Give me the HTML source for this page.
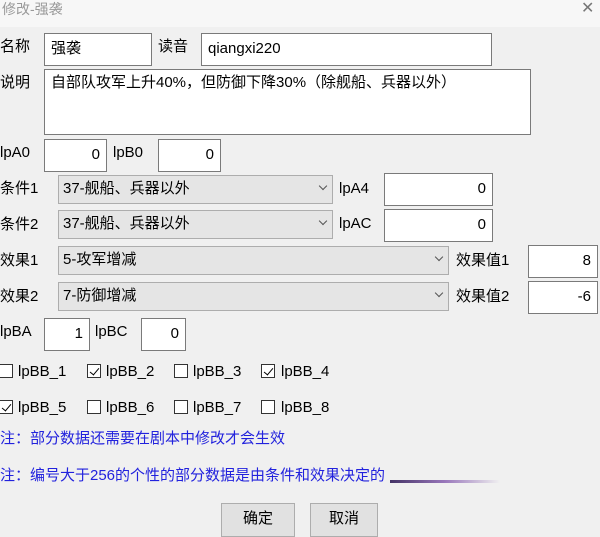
<!DOCTYPE html>
<html><head><meta charset="utf-8"><style>
*{box-sizing:border-box;margin:0;padding:0}
body{width:600px;height:531px;overflow:hidden;background:#f0f0f0;position:relative;font-family:"Liberation Sans","Noto Sans CJK SC",sans-serif;font-size:15px;color:#000}
.t{position:absolute;white-space:nowrap;line-height:18px}
.i{position:absolute;background:#fff;border:1px solid #7a7a7a;line-height:18px;padding:0 6px;white-space:nowrap}
.r{text-align:right;padding-top:6px}
.s{position:absolute;background:#e5e5e5;border:1px solid #adadad;padding:4px 4px 0;line-height:18px;white-space:nowrap}
.s:after{content:"";position:absolute;right:6px;top:7px;width:5px;height:5px;border-right:1px solid #555;border-bottom:1px solid #555;transform:rotate(45deg)}
.c{position:absolute;width:14px;height:14px;border:1px solid #333;background:#fff}
.c.k:after{content:"";position:absolute;left:4px;top:1px;width:4px;height:8px;border-right:1px solid #000;border-bottom:1px solid #000;transform:rotate(40deg)}
.b{position:absolute;background:#e1e1e1;border:1px solid #adadad;text-align:center;line-height:30px}
.n{color:#2222dd;font-size:15px}
</style></head><body>
<div style="position:absolute;left:0;top:0;width:600px;height:27px;background:#f7f7f7"></div>
<div class="t" style="left:2px;top:0;color:#999;font-size:14px">修改-强袭</div>
<div class="t" style="left:581px;top:0;color:#777;font-size:16px">✕</div>

<div class="t" style="left:0;top:38px">名称</div>
<div class="i" style="left:44px;top:33px;width:108px;height:33px;padding-top:6px">强袭</div>
<div class="t" style="left:158px;top:38px">读音</div>
<div class="i" style="left:201px;top:33px;width:291px;height:33px;padding-top:6px">qiangxi220</div>

<div class="t" style="left:0;top:74px">说明</div>
<div class="i" style="left:44px;top:69px;width:487px;height:66px;padding-top:4px">自部队攻军上升40%，但防御下降30%（除舰船、兵器以外）</div>

<div class="t" style="left:0;top:144px">lpA0</div>
<div class="i r" style="left:44px;top:139px;width:63px;height:33px">0</div>
<div class="t" style="left:113px;top:144px">lpB0</div>
<div class="i r" style="left:158px;top:139px;width:63px;height:33px">0</div>

<div class="t" style="left:0;top:180px">条件1</div>
<div class="s" style="left:58px;top:175px;width:275px;height:29px">37-舰船、兵器以外</div>
<div class="t" style="left:339px;top:180px">lpA4</div>
<div class="i r" style="left:384px;top:173px;width:109px;height:33px">0</div>

<div class="t" style="left:0;top:216px">条件2</div>
<div class="s" style="left:58px;top:210px;width:275px;height:29px">37-舰船、兵器以外</div>
<div class="t" style="left:339px;top:215px">lpAC</div>
<div class="i r" style="left:384px;top:209px;width:109px;height:33px">0</div>

<div class="t" style="left:0;top:252px">效果1</div>
<div class="s" style="left:58px;top:246px;width:391px;height:29px">5-攻军增减</div>
<div class="t" style="left:456px;top:252px">效果值1</div>
<div class="i r" style="left:528px;top:245px;width:70px;height:33px">8</div>

<div class="t" style="left:0;top:288px">效果2</div>
<div class="s" style="left:58px;top:282px;width:391px;height:29px">7-防御增减</div>
<div class="t" style="left:456px;top:288px">效果值2</div>
<div class="i r" style="left:528px;top:281px;width:70px;height:33px">-6</div>

<div class="t" style="left:0;top:323px">lpBA</div>
<div class="i r" style="left:44px;top:318px;width:46px;height:33px">1</div>
<div class="t" style="left:95px;top:323px">lpBC</div>
<div class="i r" style="left:141px;top:318px;width:45px;height:33px">0</div>

<div class="c" style="left:-1px;top:364px"></div><div class="t" style="left:18px;top:363px">lpBB_1</div>
<div class="c k" style="left:87px;top:364px"></div><div class="t" style="left:106px;top:363px">lpBB_2</div>
<div class="c" style="left:174px;top:364px"></div><div class="t" style="left:193px;top:363px">lpBB_3</div>
<div class="c k" style="left:261px;top:364px"></div><div class="t" style="left:281px;top:363px">lpBB_4</div>

<div class="c k" style="left:-1px;top:400px"></div><div class="t" style="left:18px;top:399px">lpBB_5</div>
<div class="c" style="left:87px;top:400px"></div><div class="t" style="left:106px;top:399px">lpBB_6</div>
<div class="c" style="left:174px;top:400px"></div><div class="t" style="left:193px;top:399px">lpBB_7</div>
<div class="c" style="left:261px;top:400px"></div><div class="t" style="left:281px;top:399px">lpBB_8</div>

<div class="t n" style="left:0;top:430px">注：部分数据还需要在剧本中修改才会生效</div>
<div class="t n" style="left:0;top:467px">注：编号大于256的个性的部分数据是由条件和效果决定的</div>
<div style="position:absolute;left:390px;top:480px;width:110px;height:3px;background:linear-gradient(90deg,#443366,#9977bb 50%,rgba(240,220,250,0))"></div>

<div class="b" style="left:221px;top:503px;width:74px;height:34px">确定</div>
<div class="b" style="left:310px;top:503px;width:68px;height:34px">取消</div>
</body></html>
